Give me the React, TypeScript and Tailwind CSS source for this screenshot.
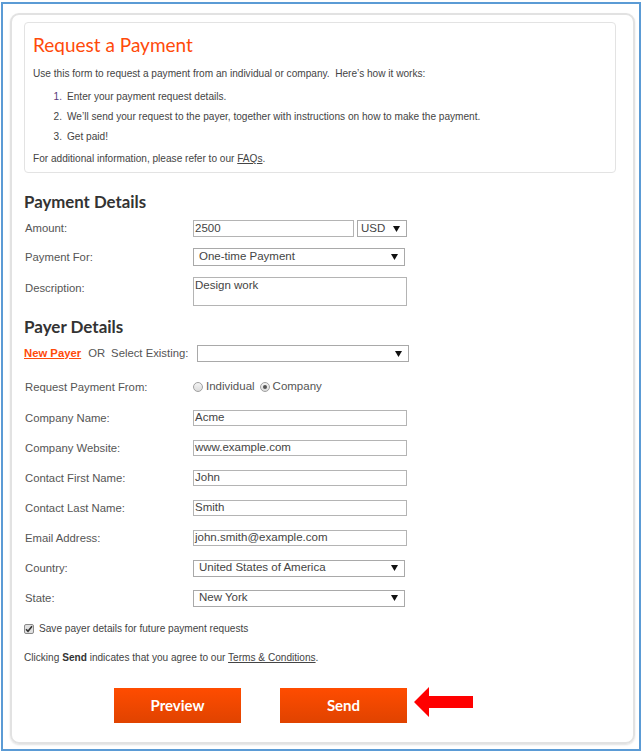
import React from "react";

const body = { fontFamily: '"Liberation Sans", Arial, sans-serif' };
const head = { fontFamily: 'Lato, "Open Sans", sans-serif' };

function Caret() {
  return (
    <svg width="7" height="6" viewBox="0 0 7 6" className="shrink-0">
      <polygon points="0,0 7,0 3.5,6" fill="#111" />
    </svg>
  );
}

function Select({ value, w, pl = "pl-[5px]", h = "h-[17px]" }: { value: string; w: string; pl?: string; h?: string }) {
  return (
    <div className={`${w} ${h} border border-[#a9a9a9] bg-white flex items-center justify-between ${pl} pr-[6px] text-[11.5px] text-[#444] leading-none`}>
      <span>{value}</span>
      <Caret />
    </div>
  );
}

function TextInput({ value, w = "w-[214px]" }: { value: string; w?: string }) {
  return (
    <div className={`${w} h-[16px] border border-[#b4b4b4] bg-white flex items-center pl-[1px] text-[11.5px] text-[#444] leading-none`}>
      {value}
    </div>
  );
}

function Row({ label, children }: { label: string; children: React.ReactNode }) {
  return (
    <div className="h-[30px] flex items-center">
      <div className="w-[169px] pl-[1px] text-[11.3px] text-[#555]">{label}</div>
      {children}
    </div>
  );
}

function Radio({ checked }: { checked?: boolean }) {
  return (
    <span className="w-[10px] h-[10px] rounded-full border border-[#a0a0a0] bg-gradient-to-b from-[#f4f4f4] to-[#dcdcdc] flex items-center justify-center">
      {checked && <span className="w-[4px] h-[4px] rounded-full bg-[#555]" />}
    </span>
  );
}

export default function App() {
  return (
    <div className="w-[644px] h-[755px] bg-white pt-[2px] pl-[1px]" style={body}>
      <div className="w-[640px] h-[749px] border-2 border-[#5b9bd5] pt-[9px] pl-[7px]">
        <div className="w-[625px] h-[731px] border-2 border-[#e2e2e2] rounded-[9px] shadow-[0_1px_2px_rgba(0,0,0,0.12)] pt-[7px] pl-[12px]">
          {/* Info box */}
          <div className="w-[592px] border border-[#e3e3e3] rounded-[4px] pl-[8px] pt-[10px] pb-[5px] text-[10.1px] text-[#444]">
            <div className="text-[19px] leading-[24px] text-[#ff4a0a]" style={head}>Request a Payment</div>
            <div className="mt-[9px] leading-[16px]">Use this form to request a payment from an individual or company.&nbsp; Here’s how it works:</div>
            <div className="mt-[7px] flex flex-col gap-[4px] leading-[16px]">
              <div className="flex"><span className="w-[34px] text-right pr-[5px] text-[#5a3a7a]">1.</span><span>Enter your payment request details.</span></div>
              <div className="flex"><span className="w-[34px] text-right pr-[5px]">2.</span><span>We’ll send your request to the payer, together with instructions on how to make the payment.</span></div>
              <div className="flex"><span className="w-[34px] text-right pr-[5px]">3.</span><span>Get paid!</span></div>
            </div>
            <div className="mt-[6px] leading-[16px]">For additional information, please refer to our <span className="underline">FAQs</span>.</div>
          </div>

          {/* Payment details */}
          <div className="mt-[19px] text-[16.8px] leading-[20px] font-bold text-[#333]" style={head}>Payment Details</div>
          <div className="mt-[8px] h-[17px] flex items-center">
            <div className="w-[169px] pl-[1px] text-[11.3px] text-[#555]">Amount:</div>
            <div className="w-[161px] h-[17px] border border-[#b4b4b4] flex items-center pl-[1px] text-[11.5px] text-[#444] leading-none">2500</div>
            <div className="ml-[3px]"><Select value="USD" w="w-[50px]" pl="pl-[3px]" /></div>
          </div>
          <div className="mt-[11px] h-[18px] flex items-center">
            <div className="w-[169px] pl-[1px] text-[11.3px] text-[#555]">Payment For:</div>
            <Select value="One-time Payment" w="w-[212px]" h="h-[18px]" />
          </div>
          <div className="mt-[11px] flex items-start">
            <div className="w-[169px] pl-[1px] pt-[3px] text-[11.3px] leading-[16px] text-[#555]">Description:</div>
            <div className="w-[214px] h-[29px] border border-[#b4b4b4] pl-[1px] text-[11.5px] leading-[14px] text-[#444]">Design work</div>
          </div>

          {/* Payer details */}
          <div className="mt-[11px] text-[17px] leading-[20px] font-bold text-[#333]" style={head}>Payer Details</div>
          <div className="mt-[8px] h-[17px] flex items-center text-[11.3px] text-[#555]">
            <span className="text-[#ff4a0a] font-bold underline">New Payer</span>
            <span className="ml-[7px]">OR</span>
            <span className="ml-[6px]">Select Existing:</span>
            <div className="ml-[9px]"><Select value="" w="w-[212px]" /></div>
          </div>

          <div className="mt-[10px]" />
          <div className="h-[30px] flex items-center">
            <div className="w-[169px] pl-[1px] text-[11.3px] text-[#555]">Request Payment From:</div>
            <div className="flex items-center text-[11.5px] text-[#555]">
              <Radio />
              <span className="ml-[3px]">Individual</span>
              <span className="ml-[5px]"><Radio checked /></span>
              <span className="ml-[3px]">Company</span>
            </div>
          </div>
          <div className="h-[1px]" />
          <Row label="Company Name:"><TextInput value="Acme" /></Row>
          <Row label="Company Website:"><TextInput value="www.example.com" /></Row>
          <Row label="Contact First Name:"><TextInput value="John" /></Row>
          <Row label="Contact Last Name:"><TextInput value="Smith" /></Row>
          <Row label="Email Address:"><TextInput value="john.smith@example.com" /></Row>
          <Row label="Country:"><Select value="United States of America" w="w-[212px]" /></Row>
          <Row label="State:"><Select value="New York" w="w-[212px]" /></Row>

          <div className="mt-[8px] h-[16px] flex items-center text-[10.1px] text-[#444]">
            <span className="w-[10px] h-[10px] border border-[#8a8a8a] rounded-[2px] bg-[#e0e0e0] flex items-center justify-center">
              <svg width="8" height="8" viewBox="0 0 8 8"><path d="M1 4.2 L3 6.3 L7 1.3" stroke="#333" strokeWidth="1.6" fill="none" /></svg>
            </span>
            <span className="ml-[5px]">Save payer details for future payment requests</span>
          </div>
          <div className="mt-[13px] h-[16px] flex items-center text-[10.1px] text-[#444]">
            <span>Clicking <b className="text-[#333]">Send</b> indicates that you agree to our <span className="underline">Terms &amp; Conditions</span>.</span>
          </div>

          <div className="mt-[20px] flex items-center pl-[90px]">
            <div className="w-[127px] h-[35px] bg-gradient-to-b from-[#ff4c00] to-[#e04300] flex items-center justify-center text-white font-bold text-[15px]" style={head}>Preview</div>
            <div className="ml-[39px] w-[127px] h-[35px] bg-gradient-to-b from-[#ff4c00] to-[#e04300] flex items-center justify-center text-white font-bold text-[15px]" style={head}>Send</div>
            <svg width="62" height="38" viewBox="0 0 62 38" className="ml-[6px]">
              <polygon points="1,16 16,1 16,10 60,10 60,22 16,22 16,31" fill="#ff0000" />
            </svg>
          </div>
        </div>
      </div>
    </div>
  );
}
